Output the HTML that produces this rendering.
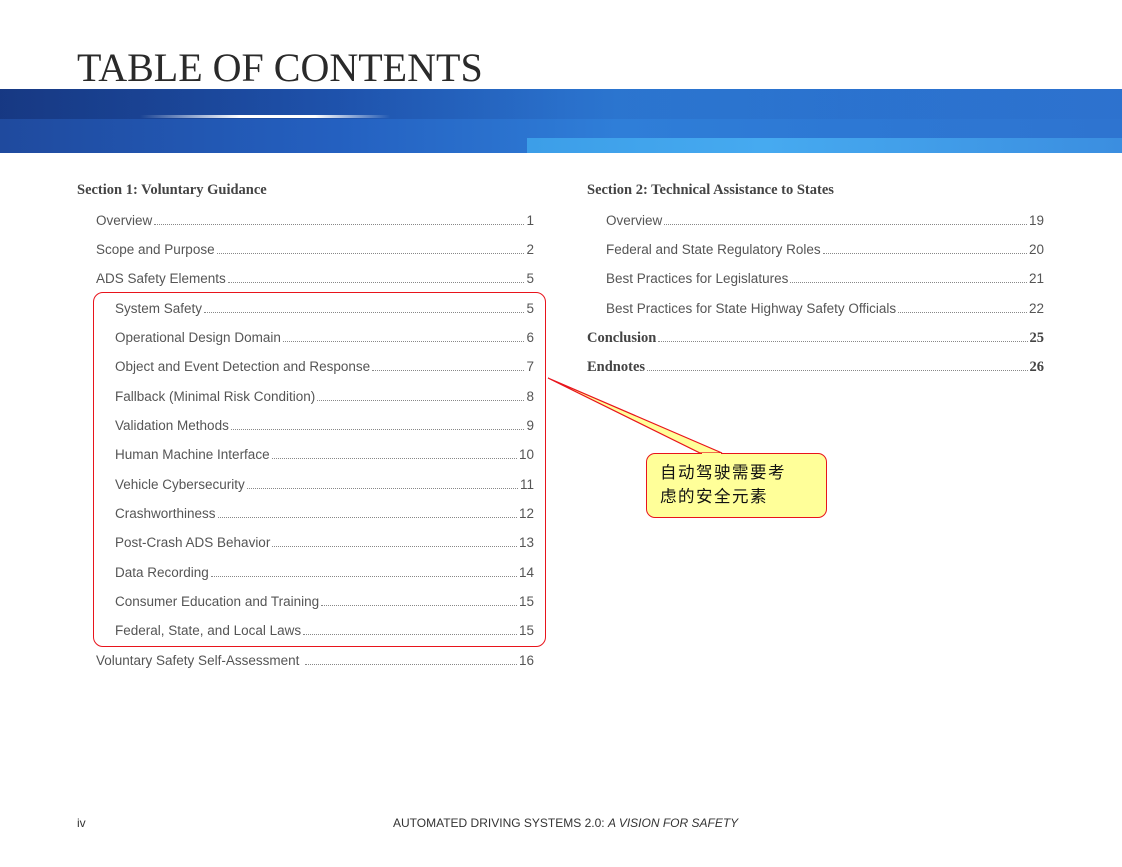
<!DOCTYPE html>
<html><head><meta charset="utf-8"><style>
body{margin:0;width:1122px;height:867px;background:#fff;position:relative;overflow:hidden;font-family:"Liberation Sans",sans-serif;color:#4a4a4a}
.t{position:absolute;left:77px;top:44px;font-family:"Liberation Serif",serif;font-size:40px;color:#2a2a2a}
.ban{position:absolute;left:0;top:89px;width:1122px;height:64px;background:linear-gradient(90deg,#1f4a9e 0%,#2460c0 30%,#2f7ed8 55%,#2d78d4 75%,#2e74d0 100%)}
.ban:before{content:"";position:absolute;left:0;top:0;width:100%;height:30px;background:linear-gradient(90deg,rgba(10,30,90,.4),rgba(20,60,150,.15) 50%,rgba(30,80,180,.05))}
.ban .s{position:absolute;left:140px;top:26px;width:250px;height:3px;background:linear-gradient(90deg,rgba(255,255,255,0),#fff 40%,#fff 70%,rgba(255,255,255,0))}
.ban .b{position:absolute;left:527px;top:49px;width:595px;height:15px;background:linear-gradient(90deg,#3c9ee8,#46aaf0 40%,#3b8ee0)}
.r{position:absolute;display:flex;align-items:baseline;font-size:13.5px;height:18px;line-height:18px;color:#555}
.r .d{flex:1;border-bottom:1px dotted #888;margin:0 2px;height:13px}
.h{position:absolute;font-family:"Liberation Serif",serif;font-weight:bold;font-size:14.5px;color:#444}
.ft{position:absolute;top:816px;font-size:12px;color:#333}
</style></head><body>
<div class="t">TABLE OF CONTENTS</div>
<div class="ban"><div class="s"></div><div class="b"></div></div>

<div class="h" style="left:77px;top:182px">Section 1: Voluntary Guidance</div>
<div class="r" style="left:96px;width:438px;top:211px">Overview<span class="d"></span>1</div>
<div class="r" style="left:96px;width:438px;top:240px">Scope and Purpose<span class="d"></span>2</div>
<div class="r" style="left:96px;width:438px;top:269px">ADS Safety Elements<span class="d"></span>5</div>
<div class="r" style="left:115px;width:419px;top:299px">System Safety<span class="d"></span>5</div>
<div class="r" style="left:115px;width:419px;top:328px">Operational Design Domain<span class="d"></span>6</div>
<div class="r" style="left:115px;width:419px;top:357px">Object and Event Detection and Response<span class="d"></span>7</div>
<div class="r" style="left:115px;width:419px;top:387px">Fallback (Minimal Risk Condition)<span class="d"></span>8</div>
<div class="r" style="left:115px;width:419px;top:416px">Validation Methods<span class="d"></span>9</div>
<div class="r" style="left:115px;width:419px;top:445px">Human Machine Interface<span class="d"></span>10</div>
<div class="r" style="left:115px;width:419px;top:475px">Vehicle Cybersecurity<span class="d"></span>11</div>
<div class="r" style="left:115px;width:419px;top:504px">Crashworthiness<span class="d"></span>12</div>
<div class="r" style="left:115px;width:419px;top:533px">Post-Crash ADS Behavior<span class="d"></span>13</div>
<div class="r" style="left:115px;width:419px;top:563px">Data Recording<span class="d"></span>14</div>
<div class="r" style="left:115px;width:419px;top:592px">Consumer Education and Training<span class="d"></span>15</div>
<div class="r" style="left:115px;width:419px;top:621px">Federal, State, and Local Laws<span class="d"></span>15</div>
<div class="r" style="left:96px;width:438px;top:651px">Voluntary Safety Self-Assessment&nbsp;<span class="d"></span>16</div>

<div class="h" style="left:587px;top:182px">Section 2: Technical Assistance to States</div>
<div class="r" style="left:606px;width:438px;top:211px">Overview<span class="d"></span>19</div>
<div class="r" style="left:606px;width:438px;top:240px">Federal and State Regulatory Roles<span class="d"></span>20</div>
<div class="r" style="left:606px;width:438px;top:269px">Best Practices for Legislatures<span class="d"></span>21</div>
<div class="r" style="left:606px;width:438px;top:299px">Best Practices for State Highway Safety Officials<span class="d"></span>22</div>
<div class="r" style="left:587px;width:457px;top:328px;font-family:'Liberation Serif',serif;font-weight:bold;font-size:14.5px;color:#444">Conclusion<span class="d"></span>25</div>
<div class="r" style="left:587px;width:457px;top:357px;font-family:'Liberation Serif',serif;font-weight:bold;font-size:14.5px;color:#444">Endnotes<span class="d"></span>26</div>

<div style="position:absolute;left:93px;top:292px;width:451px;height:353px;border:1.5px solid #e8141c;border-radius:10px"></div>
<svg style="position:absolute;left:0;top:0" width="1122" height="867">
<path d="M548,378 L700,453 L722,453 Z" fill="#ffff99" stroke="#e8141c" stroke-width="1.2"/>
</svg>
<div style="position:absolute;left:646px;top:453px;width:179px;height:63px;background:#ffff99;border:1.2px solid #e8141c;border-radius:9px;box-sizing:content-box"></div>
<svg style="position:absolute;left:0;top:0" width="1122" height="867"><path d="M702,454 L721,454" stroke="#ffff99" stroke-width="2"/></svg>
<div style="position:absolute;left:660px;top:461px;font-family:'Liberation Sans','Noto Sans CJK SC',sans-serif;font-size:16.5px;line-height:24px;color:#111;letter-spacing:1.5px">自动驾驶需要考<br>虑的安全元素</div>

<div class="ft" style="left:77px">iv</div>
<div class="ft" style="left:393px">AUTOMATED DRIVING SYSTEMS 2.0: <i>A VISION FOR SAFETY</i></div>
</body></html>
